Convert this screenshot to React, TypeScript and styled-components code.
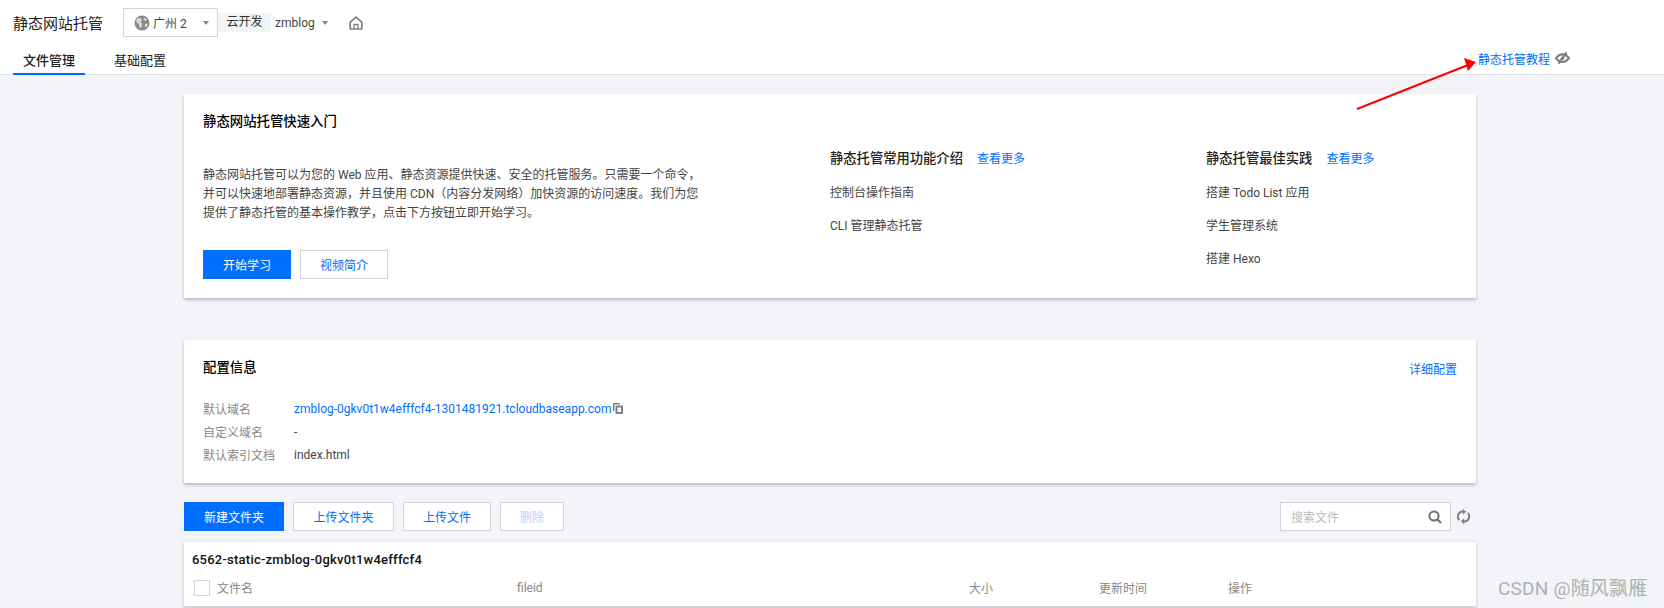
import React from 'react';
import styled, { createGlobalStyle } from 'styled-components';

const GlobalStyle = createGlobalStyle`
  html, body {
    margin: 0;
    padding: 0;
    background: #f2f4f8;
  }
  body {
    font-family: Roboto, "Noto Sans CJK SC", sans-serif;
    font-size: 12px;
    color: #444;
  }
`;

const Page = styled.div`
  position: relative;
  height: 608px;
  overflow: hidden;
`;

const Header = styled.header`
  background: #fff;
  border-bottom: 1px solid #dfe3ea;
  padding: 8px 94px 0 13px;
  height: 66px;
`;

const TopRow = styled.div`
  display: flex;
  align-items: center;
  height: 29px;
`;

const PageTitle = styled.h1`
  margin: 0 20px 0 0;
  width: 90px;
  font-size: 15px;
  font-weight: 400;
  color: #222;
  white-space: nowrap;
`;

const RegionSelect = styled.div`
  display: flex;
  align-items: center;
  width: 95px;
  height: 29px;
  box-sizing: border-box;
  border: 1px solid #cfd5de;
  padding: 0 8px 0 10px;
  color: #444;
`;

const RegionName = styled.span`
  margin-left: 3px;
  flex: 1;
`;

const Caret = styled.i`
  width: 0;
  height: 0;
  border-left: 3.5px solid transparent;
  border-right: 3.5px solid transparent;
  border-top: 4px solid #888;
`;

const EnvTag = styled.span`
  width: 53px;
  height: 19px;
  line-height: 19px;
  text-align: center;
  background: #f2f4f8;
  color: #333;
`;

const EnvName = styled.span`
  display: flex;
  align-items: center;
  gap: 7px;
  margin: 0 21px 0 4px;
  color: #444;
`;

const TabRow = styled.div`
  display: flex;
  align-items: flex-end;
  height: 37px;
`;

const Tab = styled.div<{ $active?: boolean }>`
  height: 28px;
  line-height: 28px;
  padding: 0 10px;
  margin-right: 19px;
  box-sizing: border-box;
  font-size: 13px;
  font-weight: ${(p) => (p.$active ? 500 : 400)};
  color: #222;
  margin-bottom: -1px;
  border-bottom: 2px solid ${(p) => (p.$active ? '#006eff' : 'transparent')};
`;

const TutorialLink = styled.div`
  display: flex;
  align-items: center;
  gap: 5px;
  margin-left: auto;
  align-self: flex-end;
  height: 30px;
  margin-bottom: 1px;
  color: #006eff;
`;

const Main = styled.main`
  width: 1292px;
  margin-left: 184px;
  padding-top: 19px;
`;

const Card = styled.section`
  background: #fff;
  padding: 18px 19px 19px;
  box-shadow: 0 2px 3px 0 rgba(54, 58, 80, 0.32);
`;

const IntroGrid = styled.div`
  display: grid;
  grid-template-columns: 627px 376px 1fr;
`;

const CardTitle = styled.h2`
  margin: 0;
  font-size: 13.4px;
  line-height: 20px;
  font-weight: 500;
  color: #000;
`;

const Lead = styled.p`
  margin: 34px 0 27px;
  width: 498px;
  line-height: 19px;
  color: #444;
`;

const ButtonRow = styled.div`
  display: flex;
  gap: 9px;
`;

const Button = styled.button<{ $primary?: boolean; $width: number; $disabled?: boolean }>`
  width: ${(p) => p.$width}px;
  height: 29px;
  padding: 0;
  box-sizing: border-box;
  font: inherit;
  border: 1px solid ${(p) => (p.$primary ? '#006eff' : '#cfd5de')};
  background: ${(p) => (p.$primary ? '#006eff' : '#fff')};
  color: ${(p) => (p.$primary ? '#fff' : p.$disabled ? '#b3d4ff' : '#006eff')};
`;

const LinkColumn = styled.div`
  padding-top: 37px;
`;

const ColumnHead = styled.div`
  display: flex;
  gap: 14px;
  line-height: 20px;
  margin-bottom: 14px;
`;

const ColumnTitle = styled.span`
  font-size: 13.3px;
  font-weight: 500;
  color: #222;
`;

const More = styled.a`
  color: #006eff;
`;

const LinkItem = styled.div`
  line-height: 20px;
  color: #444;
  & + & {
    margin-top: 13px;
  }
`;

const ConfigCard = styled(Card)`
  margin-top: 42px;
  padding-bottom: 17px;
`;

const ConfigHead = styled.div`
  display: flex;
  justify-content: space-between;
  align-items: center;
  margin-bottom: 19px;
`;

const ConfigRow = styled.div`
  display: flex;
  align-items: center;
  height: 23px;
`;

const ConfigLabel = styled.span`
  width: 91px;
  color: #888;
`;

const ConfigValue = styled.span<{ $link?: boolean }>`
  display: flex;
  align-items: center;
  gap: 2px;
  color: ${(p) => (p.$link ? '#006eff' : '#444')};
`;

const Toolbar = styled.div`
  display: flex;
  align-items: center;
  margin-top: 19px;
  gap: 9px;
`;

const SearchBox = styled.div`
  display: flex;
  align-items: center;
  justify-content: space-between;
  width: 171px;
  height: 29px;
  margin-left: auto;
  margin-right: -3px;
  box-sizing: border-box;
  border: 1px solid #cfd5de;
  background: #fff;
  padding: 0 8px 0 10px;
  color: #bbb;
`;

const Refresh = styled.span`
  display: flex;
  margin-right: 6px;
`;

const TableCard = styled.section`
  margin-top: 11px;
  background: #fff;
  box-shadow: 0 1px 3px 0 rgba(54, 58, 80, 0.3);
`;

const BucketName = styled.div`
  padding: 8px 8px 0;
  font-size: 13px;
  line-height: 20px;
  font-weight: 500;
  letter-spacing: 0.23px;
  color: #111;
`;

const TableHead = styled.div`
  display: grid;
  grid-template-columns: 333px 452px 130px 129px 1fr;
  align-items: center;
  height: 37px;
  padding-bottom: 1px;
  box-sizing: border-box;
  border-bottom: 1px solid #cfd5de;
  color: #888;
`;

const NameCell = styled.div`
  display: flex;
  align-items: center;
  gap: 7px;
  padding-left: 10px;
`;

const Checkbox = styled.span`
  width: 16px;
  height: 16px;
  box-sizing: border-box;
  border: 1px solid #cfd5de;
`;

const Watermark = styled.div`
  position: absolute;
  left: 1498px;
  top: 577px;
  font-size: 19px;
  line-height: 24px;
  letter-spacing: 0.2px;
  color: #b0b0b0;
  white-space: nowrap;
`;

const ArrowOverlay = styled.svg`
  position: absolute;
  left: 1350px;
  top: 55px;
`;

const GlobeIcon = () => (
  <svg width="16" height="16" viewBox="0 0 16 16">
    <circle cx="8" cy="8" r="7.5" fill="#888" />
    <path d="M3 3.5 6.5 3 8 5 6.5 7 8.5 9 7 13 5.5 12.5 5 9 2 7Z M10 2.5 13 4.5 11.5 6 9.5 4.5Z M11 9 14 8.5 12.5 12.5 10.5 11.5Z" fill="#dcdcdc" />
  </svg>
);

const HomeIcon = () => (
  <svg width="14" height="14" viewBox="0 0 14 14" fill="none" stroke="#808080" strokeWidth="1.7">
    <path d="M1.2 6.2 7 1.2l5.800 5V13H1.200Z" />
    <path d="M5 13V8.500h4V13" strokeWidth="1.300" />
  </svg>
);

const EyeOffIcon = () => (
  <svg width="15" height="12" viewBox="0 0 15 12" fill="none" stroke="#808080" strokeWidth="2.200">
    <path d="M1 6.200C3 3.400 5.200 2.400 7.500 2.400s4.500 1 6.500 3.800c-2 2.800-4.200 3.800-6.500 3.800S3 9 1 6.200Z" />
    <circle cx="7.500" cy="6.200" r="1.800" fill="#808080" stroke="none" />
    <path d="M11.500.500 3.500 11.500" />
  </svg>
);

const CopyIcon = () => (
  <svg width="10" height="11" viewBox="0 0 10 11" fill="none" stroke="#808080">
    <path d="M.7 8V.7H7" strokeWidth="1.400" />
    <rect x="3.500" y="3.500" width="5.500" height="6.500" strokeWidth="2" />
  </svg>
);

const SearchIcon = () => (
  <svg width="14" height="14" viewBox="0 0 14 14" fill="none" stroke="#707070" strokeWidth="2">
    <circle cx="6" cy="6" r="4.600" />
    <path d="M9.500 9.500 13 13" />
  </svg>
);

const RefreshIcon = () => (
  <svg width="13" height="15" viewBox="0 0 13 15" fill="none" stroke="#808080" strokeWidth="2">
    <path d="M2.200 11A5 5 0 0 1 6.500 2.600" />
    <path d="M10.800 4A5 5 0 0 1 6.500 12.400" />
    <path d="M6 .2 9 2.700 6 5.200Z" fill="#808080" strokeWidth="0.500" />
    <path d="M7 9.800 4 12.300 7 14.800Z" fill="#808080" strokeWidth="0.500" />
  </svg>
);

function App() {
  return (
    <Page>
      <GlobalStyle />
      <Header>
        <TopRow>
          <PageTitle>静态网站托管</PageTitle>
          <RegionSelect>
            <GlobeIcon />
            <RegionName>广州 2</RegionName>
            <Caret />
          </RegionSelect>
          <EnvTag>云开发</EnvTag>
          <EnvName>
            zmblog
            <Caret />
          </EnvName>
          <HomeIcon />
        </TopRow>
        <TabRow>
          <Tab $active>文件管理</Tab>
          <Tab>基础配置</Tab>
          <TutorialLink>
            静态托管教程
            <EyeOffIcon />
          </TutorialLink>
        </TabRow>
      </Header>
      <Main>
        <Card>
          <IntroGrid>
            <div>
              <CardTitle>静态网站托管快速入门</CardTitle>
              <Lead>
                静态网站托管可以为您的 Web 应用、静态资源提供快速、安全的托管服务。只需要一个命令，并可以快速地部署静态资源，并且使用 CDN（内容分发网络）加快资源的访问速度。我们为您提供了静态托管的基本操作教学，点击下方按钮立即开始学习。
              </Lead>
              <ButtonRow>
                <Button $primary $width={88}>开始学习</Button>
                <Button $width={88}>视频简介</Button>
              </ButtonRow>
            </div>
            <LinkColumn>
              <ColumnHead>
                <ColumnTitle>静态托管常用功能介绍</ColumnTitle>
                <More>查看更多</More>
              </ColumnHead>
              <LinkItem>控制台操作指南</LinkItem>
              <LinkItem>CLI 管理静态托管</LinkItem>
            </LinkColumn>
            <LinkColumn>
              <ColumnHead>
                <ColumnTitle>静态托管最佳实践</ColumnTitle>
                <More>查看更多</More>
              </ColumnHead>
              <LinkItem>搭建 Todo List 应用</LinkItem>
              <LinkItem>学生管理系统</LinkItem>
              <LinkItem>搭建 Hexo</LinkItem>
            </LinkColumn>
          </IntroGrid>
        </Card>
        <ConfigCard>
          <ConfigHead>
            <CardTitle>配置信息</CardTitle>
            <More>详细配置</More>
          </ConfigHead>
          <ConfigRow>
            <ConfigLabel>默认域名</ConfigLabel>
            <ConfigValue $link>
              zmblog-0gkv0t1w4efffcf4-1301481921.tcloudbaseapp.com
              <CopyIcon />
            </ConfigValue>
          </ConfigRow>
          <ConfigRow>
            <ConfigLabel>自定义域名</ConfigLabel>
            <ConfigValue>-</ConfigValue>
          </ConfigRow>
          <ConfigRow>
            <ConfigLabel>默认索引文档</ConfigLabel>
            <ConfigValue>index.html</ConfigValue>
          </ConfigRow>
        </ConfigCard>
        <Toolbar>
          <Button $primary $width={100}>新建文件夹</Button>
          <Button $width={101}>上传文件夹</Button>
          <Button $width={88}>上传文件</Button>
          <Button $disabled $width={64}>删除</Button>
          <SearchBox>
            搜索文件
            <SearchIcon />
          </SearchBox>
          <Refresh>
            <RefreshIcon />
          </Refresh>
        </Toolbar>
        <TableCard>
          <BucketName>6562-static-zmblog-0gkv0t1w4efffcf4</BucketName>
          <TableHead>
            <NameCell>
              <Checkbox />
              文件名
            </NameCell>
            <span>fileid</span>
            <span>大小</span>
            <span>更新时间</span>
            <span>操作</span>
          </TableHead>
        </TableCard>
      </Main>
      <ArrowOverlay width="135" height="60" viewBox="0 0 135 60">
        <path d="M7 54 118 10" stroke="#f00" strokeWidth="2" />
        <path d="M126 7 114 3 118 16Z" fill="#f00" />
      </ArrowOverlay>
      <Watermark>CSDN @随风飘雁</Watermark>
    </Page>
  );
}

export default App;
